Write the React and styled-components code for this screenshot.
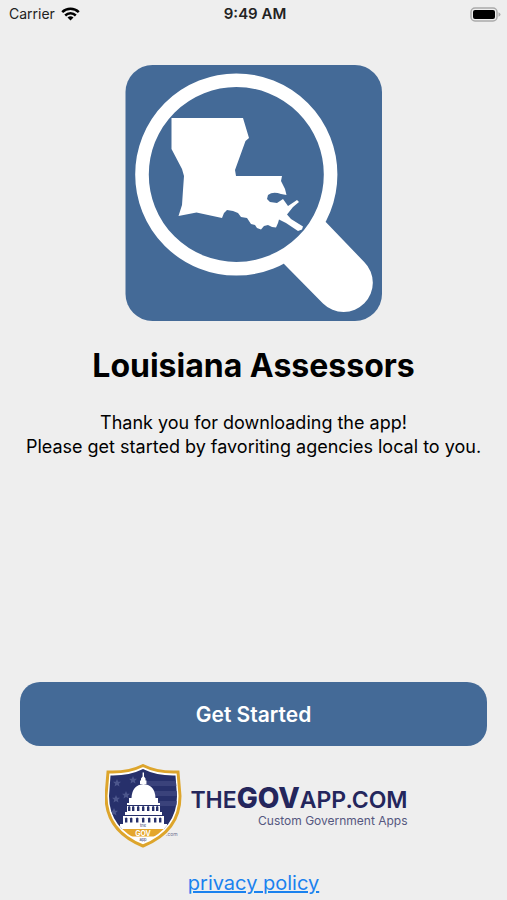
import React from "react";
import styled, { createGlobalStyle } from "styled-components";

const GlobalStyle = createGlobalStyle`
  *, *::before, *::after { box-sizing: border-box; }
  body {
    margin: 0;
    background: #eeeeee;
    color: #000;
    font-family: Inter, "Liberation Sans", sans-serif;
  }
`;

const Page = styled.div`
  display: flex;
  flex-direction: column;
  min-height: 100vh;
`;

const StatusBar = styled.header`
  display: grid;
  grid-template-columns: 1fr auto 1fr;
  align-items: center;
  height: 28px;
  padding: 0 6px 0 9px;
  font-size: 14px;
  line-height: 20px;
  color: #222;
`;

const Carrier = styled.span`
  display: flex;
  align-items: center;
  gap: 6px;
`;

const Time = styled.time`
  font-size: 15px;
  font-weight: 600;
`;

const BatteryIcon = styled.svg`
  justify-self: end;
`;

const Welcome = styled.main`
  display: flex;
  flex-direction: column;
  align-items: center;
  padding: 36px 16px 0;
  text-align: center;
`;

const Title = styled.h1`
  margin: 24px 0 0;
  font-size: 32px;
  line-height: 42px;
  font-weight: 700;
`;

const Message = styled.p`
  margin: 24px 0 0;
  font-size: 18px;
  line-height: 24px;
`;

const Footer = styled.footer`
  display: flex;
  flex-direction: column;
  align-items: center;
  margin-top: auto;
  padding: 0 20px 4px;
`;

const PrimaryButton = styled.button`
  width: 100%;
  height: 64px;
  border: 0;
  border-radius: 20px;
  background: #446a97;
  color: #fff;
  font: inherit;
  font-size: 21px;
  font-weight: 600;
  cursor: pointer;
`;

const Brand = styled.div`
  display: flex;
  align-items: center;
  gap: 8px;
  margin-top: 18px;
  padding-left: 6px;
  color: #24265c;
`;

const BrandText = styled.div`
  display: flex;
  flex-direction: column;
  align-items: flex-end;
`;

const Wordmark = styled.div`
  font-size: 23px;
  line-height: 28px;
  font-weight: 600;
`;

const WordmarkStrong = styled.strong`
  font-size: 28px;
  font-weight: 800;
`;

const Tagline = styled.div`
  font-size: 12px;
  line-height: 14px;
  color: #55577f;
`;

const PolicyLink = styled.a`
  margin-top: 22px;
  font-size: 20px;
  line-height: 26px;
  color: #1b82ee;
  text-decoration: underline;
`;

function Wifi() {
  return (
    <svg width="19" height="14" viewBox="0 0 19 14" aria-hidden="true">
      <g fill="none" stroke="#000" strokeWidth="2.5">
        <path d="M1.2 5.2a11.8 11.8 0 0 1 16.6 0" />
        <path d="M4.2 8.5a7.6 7.6 0 0 1 10.6 0" />
      </g>
      <path d="M9.5 13.6 6.5 10.6a4.3 4.3 0 0 1 6 0z" />
    </svg>
  );
}

function Battery() {
  return (
    <BatteryIcon width="31" height="15" viewBox="0 0 31 15" role="img" aria-label="Battery full">
      <rect x="1" y="1" width="26" height="13" rx="4" fill="#eee" stroke="#aaa" strokeWidth="1.5" />
      <rect x="3" y="3" width="22" height="9" rx="2" />
      <path d="M28.5 5.2q2 .8 2 2.3t-2 2.3z" fill="#aaa" />
    </BatteryIcon>
  );
}

function AssessorsLogo() {
  return (
    <svg width="257" height="257" viewBox="125 64 257 257" role="img" aria-label="Louisiana Assessors logo">
      <rect x="125.5" y="65" width="256.5" height="256" rx="27" fill="#446a97" />
      <circle cx="236.3" cy="174.5" r="94.3" fill="none" stroke="#fff" strokeWidth="13.6" />
      <path
        fill="#fff"
        d="M326 222.3 364.2 262A29.2 29.2 0 0 1 323 303.5L284.3 264.3 281 257Q309 244 320 219z"
      />
      <path
        fill="#fff"
        d="M171.5 118H243L249 138 245.5 141 235 170 236 176H282L281 181 285 189 286.5 195 281 194Q273 191 268 195L267 199 270 202 277 203 283 199 288 206 297 200 299 202 293 207 287 214.5 291 219 303 226.5 302 229.5 298 231 286 223 279 219.5 278 223 276 227.5 272 227 268 225 264 226 261 229.5 257 228 255 225 251 224 247 218 241 217 238 213 233 211 227 210 224 213 222 218 196.5 212.5 178.5 216 182 205 183 190 184 176 182 169 171.5 149z"
      />
    </svg>
  );
}

const STARS = [
  [117, 783], [133, 780], [126, 795], [116, 799], [114, 812],
];
const STAR_PATH = "M0-4 1.2-1.3 4-1.2 1.8.7 2.5 3.5 0 2-2.5 3.5-1.8.7-4-1.2-1.2-1.3z";
const UPPER_WINDOWS = [128, 132, 137, 142, 147, 152, 156];
const LOWER_WINDOWS = [125, 130, 136, 142, 148, 154, 159];

function CapitolShield() {
  return (
    <svg width="77" height="84" viewBox="105 764 77 84" role="img" aria-label="The GOV App shield">
      <defs>
        <clipPath id="shield-face">
          <path d="M143 769Q157 776 175.5 775.5L177 796Q177 828 143 842.5 109 828 109 796L110.5 775.5Q129 776 143 769z" />
        </clipPath>
      </defs>
      <path
        d="M143 765.5Q158 773 178 772L180 796Q180 831 143 846 106 831 106 796L108 772Q128 773 143 765.5z"
        fill="#fff"
        stroke="#dda52c"
        strokeWidth="3"
      />
      <g clipPath="url(#shield-face)">
        <path d="M105 764h77v65h-77z" fill="#27306b" />
        <path d="M105 829h77v19h-77z" fill="#fff" />
        <path d="M147 781h30v5h-30zM152 791h28v5h-28zM158 801h22v5h-22z" fill="#3a427b" />
        {STARS.map(([x, y]) => (
          <path key={`${x}-${y}`} d={STAR_PATH} transform={`translate(${x} ${y})`} fill="#4c568c" />
        ))}
        <path
          fill="#fff"
          d="M142.6 772.5h1.4v4l1.5 2v2h1v3.5h-6.5v-3.5h1v-2l1.6-2zM131.5 798Q132 785 143.5 784 155 785 155.5 798zM129 798h29v5h-29zM127 803h33v2h-33zM127 806h33v6h-33zM125 812h37v3h-37zM123 816h41v8h-41zM120 824h47v6h-47z"
        />
        <g fill="#27306b">
          {UPPER_WINDOWS.map((x) => (
            <path key={x} d={`M${x} 811v-4q1.2-2 2.4 0v4z`} />
          ))}
          {LOWER_WINDOWS.map((x) => (
            <path key={x} d={`M${x} 822.5v-4q1.2-2 2.4 0v4z`} />
          ))}
        </g>
        <path d="M105 829h77l-9 7.5h-60z" fill="#e4a62b" />
      </g>
      <g fontFamily="Inter, sans-serif" textAnchor="middle">
        <text x="143" y="827" fontSize="4" fill="#27306b">the</text>
        <text x="143" y="835.5" fontSize="7" fontWeight="700" fill="#fff">GOV</text>
        <text x="143" y="841" fontSize="4" fill="#27306b">app</text>
      </g>
      <text x="166" y="836" fontFamily="Inter, sans-serif" fontSize="5" fill="#6d7090">.com</text>
    </svg>
  );
}

export default function App() {
  return (
    <>
      <GlobalStyle />
      <Page>
        <StatusBar>
          <Carrier>
            Carrier
            <Wifi />
          </Carrier>
          <Time>9:49 AM</Time>
          <Battery />
        </StatusBar>
        <Welcome>
          <AssessorsLogo />
          <Title>Louisiana Assessors</Title>
          <Message>
            Thank you for downloading the app!
            <br />
            Please get started by favoriting agencies local to you.
          </Message>
        </Welcome>
        <Footer>
          <PrimaryButton type="button">Get Started</PrimaryButton>
          <Brand>
            <CapitolShield />
            <BrandText>
              <Wordmark>
                THE<WordmarkStrong>GOV</WordmarkStrong>APP.COM
              </Wordmark>
              <Tagline>Custom Government Apps</Tagline>
            </BrandText>
          </Brand>
          <PolicyLink href="#privacy">privacy policy</PolicyLink>
        </Footer>
      </Page>
    </>
  );
}
